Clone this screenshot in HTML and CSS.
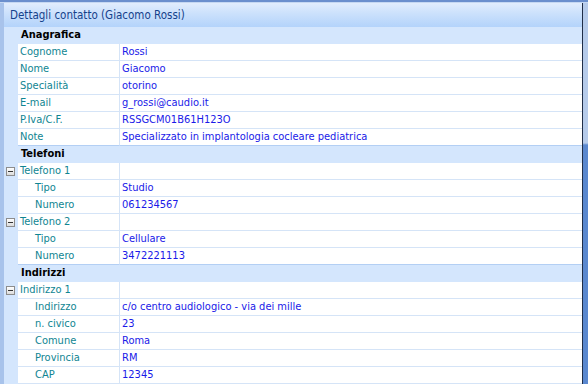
FILE: index.html
```html
<!DOCTYPE html>
<html lang="it">
<head>
<meta charset="utf-8">
<title>Dettagli contatto</title>
<link rel="stylesheet" href="styles.css">
</head>
<body>
<div class="frame">
  <div class="topbar"></div>
  <div class="main">
    <div class="leftstrip"></div>
    <div class="panel">
      <div class="title">Dettagli contatto (Giacomo Rossi)</div>
      <div class="grid">
        <div class="row cat"><span class="gutter"></span><span class="catname">Anagrafica</span></div>
        <div class="row"><span class="gutter"></span><span class="name">Cognome</span><span class="value">Rossi</span></div>
        <div class="row"><span class="gutter"></span><span class="name">Nome</span><span class="value">Giacomo</span></div>
        <div class="row"><span class="gutter"></span><span class="name">Specialità</span><span class="value">otorino</span></div>
        <div class="row"><span class="gutter"></span><span class="name">E-mail</span><span class="value">g_rossi@caudio.it</span></div>
        <div class="row"><span class="gutter"></span><span class="name">P.Iva/C.F.</span><span class="value">RSSGCM01B61H123O</span></div>
        <div class="row"><span class="gutter"></span><span class="name">Note</span><span class="value">Specializzato in implantologia cocleare pediatrica</span></div>
        <div class="row cat"><span class="gutter"></span><span class="catname">Telefoni</span></div>
        <div class="row"><span class="gutter"><span class="toggle"></span></span><span class="name">Telefono 1</span><span class="value"></span></div>
        <div class="row"><span class="gutter"></span><span class="name sub">Tipo</span><span class="value">Studio</span></div>
        <div class="row"><span class="gutter"></span><span class="name sub">Numero</span><span class="value">061234567</span></div>
        <div class="row"><span class="gutter"><span class="toggle"></span></span><span class="name">Telefono 2</span><span class="value"></span></div>
        <div class="row"><span class="gutter"></span><span class="name sub">Tipo</span><span class="value">Cellulare</span></div>
        <div class="row"><span class="gutter"></span><span class="name sub">Numero</span><span class="value">3472221113</span></div>
        <div class="row cat"><span class="gutter"></span><span class="catname">Indirizzi</span></div>
        <div class="row"><span class="gutter"><span class="toggle"></span></span><span class="name">Indirizzo 1</span><span class="value"></span></div>
        <div class="row"><span class="gutter"></span><span class="name sub">Indirizzo</span><span class="value">c/o centro audiologico - via dei mille</span></div>
        <div class="row"><span class="gutter"></span><span class="name sub">n. civico</span><span class="value">23</span></div>
        <div class="row"><span class="gutter"></span><span class="name sub">Comune</span><span class="value">Roma</span></div>
        <div class="row"><span class="gutter"></span><span class="name sub">Provincia</span><span class="value">RM</span></div>
        <div class="row"><span class="gutter"></span><span class="name sub">CAP</span><span class="value">12345</span></div>
      </div>
    </div>
    <div class="rightstrip"></div>
  </div>
</div>
</body>
</html>
```
FILE: styles.css
```css
html, body {
  margin: 0;
  padding: 0;
  overflow: hidden;
}
body {
  font-family: "DejaVu Sans Condensed", "DejaVu Sans", Verdana, sans-serif;
  font-stretch: condensed;
  font-size: 11px;
}
.frame {
  width: 588px;
  height: 384px;
  display: flex;
  flex-direction: column;
  background: #a8c3eb;
}
.topbar {
  height: 3px;
  flex: none;
  background: linear-gradient(#6b8fcd 0, #6b8fcd 2px, #c6d8f2 2px);
}
.main {
  flex: 1;
  display: flex;
  min-height: 0;
}
.leftstrip {
  width: 4px;
  flex: none;
  background: #a8c3eb;
}
.panel {
  flex: 1;
  display: flex;
  flex-direction: column;
  background: #fff;
  border-right: 1px solid #1f2d47;
  overflow: hidden;
}
.rightstrip {
  width: 5px;
  flex: none;
  background: linear-gradient(to bottom, #b6cbea 0, #b6cbea 140px, #5a88cf 142px, #5a88cf 100%);
}
.title {
  height: 24px;
  flex: none;
  box-sizing: border-box;
  padding-left: 6px;
  line-height: 24px;
  color: #15428b;
  font-size: 11.5px;
  background: linear-gradient(to bottom, #e2edfd 0, #cde2fc 40%, #b3d3fb 100%);
}
.row {
  display: flex;
  height: 17px;
  line-height: 16px;
}
.gutter {
  width: 14px;
  flex: none;
  background: #d4e6fd;
  position: relative;
}
.name, .value {
  box-sizing: border-box;
  height: 17px;
  border-bottom: 1px solid #d5e4f7;
  white-space: nowrap;
  overflow: hidden;
}
.name {
  width: 102px;
  flex: none;
  padding-left: 2px;
  color: #0f8592;
  border-right: 1px solid #d5e4f7;
}
.name.sub {
  padding-left: 17px;
}
.value {
  flex: 1;
  padding-left: 2px;
  color: #1a1ae8;
}
.row:has(+ .cat) .name,
.row:has(+ .cat) .value {
  border-bottom-color: #b3cff4;
}
.cat {
  background: #d4e6fd;
}
.catname {
  padding-left: 3px;
  font-weight: bold;
  color: #000;
}
.toggle {
  position: absolute;
  left: 2px;
  top: 4px;
  width: 9px;
  height: 9px;
  box-sizing: border-box;
  border: 1px solid #8d8d8d;
  background: linear-gradient(#ffffff, #dcdcdc);
}
.toggle::after {
  content: "";
  position: absolute;
  left: 1px;
  top: 3px;
  width: 5px;
  height: 1px;
  background: #333;
}
```
